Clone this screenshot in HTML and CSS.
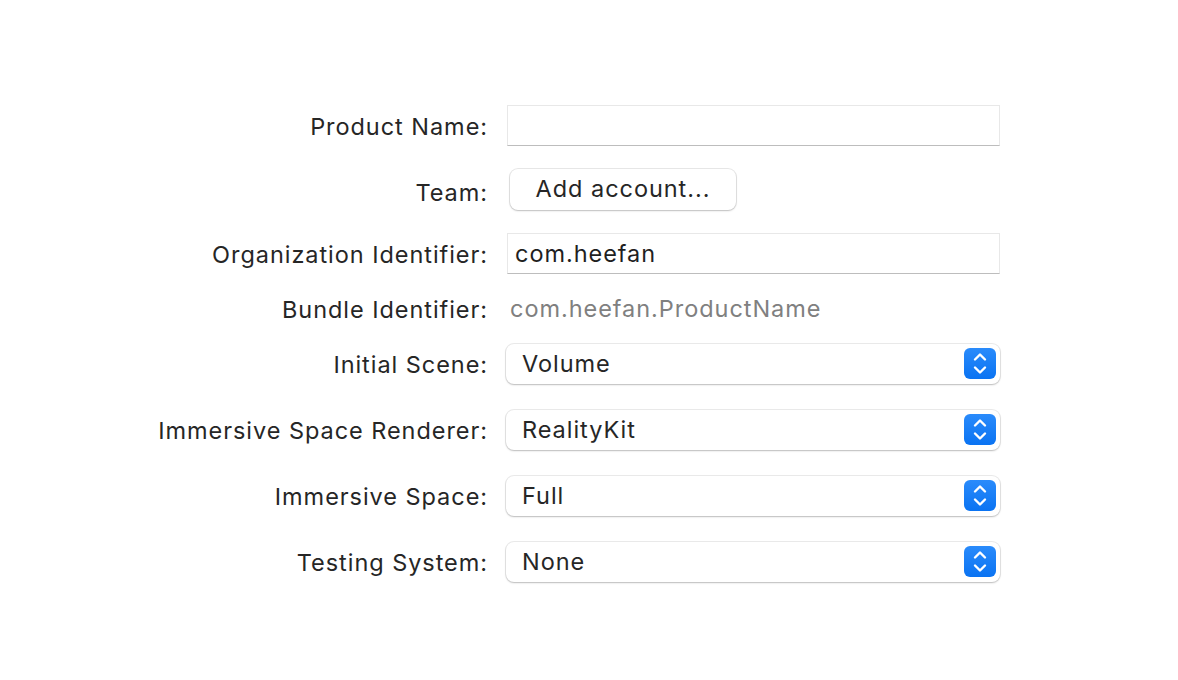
FILE: index.html
```html
<!DOCTYPE html>
<html>
<head>
<meta charset="utf-8">
<link rel="stylesheet" href="styles.css">
</head>
<body>
<div class="form">
  <div class="row">
    <div class="label">Product Name:</div>
    <div class="field"><div class="textfield"></div></div>
  </div>
  <div class="row">
    <div class="label label-team">Team:</div>
    <div class="field"><div class="button">Add account...</div></div>
  </div>
  <div class="row">
    <div class="label">Organization Identifier:</div>
    <div class="field"><div class="textfield">com.heefan</div></div>
  </div>
  <div class="row row-static">
    <div class="label">Bundle Identifier:</div>
    <div class="field"><div class="static">com.heefan.ProductName</div></div>
  </div>
  <div class="row row-popup">
    <div class="label">Initial Scene:</div>
    <div class="field"><div class="popup"><span>Volume</span><span class="stepper"><svg width="32" height="31" viewBox="0 0 32 31"><path d="M11 11.5 L16 6.5 L21 11.5 M11 19.5 L16 24.5 L21 19.5" fill="none" stroke="#fff" stroke-width="2.4" stroke-linecap="round" stroke-linejoin="round"/></svg></span></div></div>
  </div>
  <div class="row row-popup">
    <div class="label">Immersive Space Renderer:</div>
    <div class="field"><div class="popup"><span>RealityKit</span><span class="stepper"><svg width="32" height="31" viewBox="0 0 32 31"><path d="M11 11.5 L16 6.5 L21 11.5 M11 19.5 L16 24.5 L21 19.5" fill="none" stroke="#fff" stroke-width="2.4" stroke-linecap="round" stroke-linejoin="round"/></svg></span></div></div>
  </div>
  <div class="row row-popup">
    <div class="label">Immersive Space:</div>
    <div class="field"><div class="popup"><span>Full</span><span class="stepper"><svg width="32" height="31" viewBox="0 0 32 31"><path d="M11 11.5 L16 6.5 L21 11.5 M11 19.5 L16 24.5 L21 19.5" fill="none" stroke="#fff" stroke-width="2.4" stroke-linecap="round" stroke-linejoin="round"/></svg></span></div></div>
  </div>
  <div class="row row-popup">
    <div class="label">Testing System:</div>
    <div class="field"><div class="popup"><span>None</span><span class="stepper"><svg width="32" height="31" viewBox="0 0 32 31"><path d="M11 11.5 L16 6.5 L21 11.5 M11 19.5 L16 24.5 L21 19.5" fill="none" stroke="#fff" stroke-width="2.4" stroke-linecap="round" stroke-linejoin="round"/></svg></span></div></div>
  </div>
</div>
</body>
</html>
```

FILE: styles.css
```css
html, body {
  margin: 0;
  padding: 0;
  background: #ffffff;
}
body {
  font-family: Inter, "Liberation Sans", sans-serif;
  font-size: 23.5px;
  letter-spacing: 0.95px;
  color: #262626;
  width: 1178px;
  height: 680px;
  overflow: hidden;
}
.form {
  display: flex;
  flex-direction: column;
  padding-top: 105px;
}
.row {
  display: grid;
  grid-template-columns: 487px 494px;
  column-gap: 19px;
  height: 41px;
  margin-bottom: 23px;
  align-items: center;
}
.row-static {
  height: 28px;
  margin-bottom: 18px;
}
.row-popup {
  margin-bottom: 25px;
}
.label {
  text-align: right;
  padding-top: 1px;
  white-space: nowrap;
  margin-right: -1px;
}
.label-team {
  padding-top: 6px;
}
.row-static .label,
.row-static .static {
  margin-top: -6px;
}
.row-static .label {
  margin-top: -4px;
}
.field {
  display: flex;
  align-items: center;
  height: 100%;
}
.textfield {
  box-sizing: border-box;
  margin-left: 1px;
  width: 493px;
  height: 41px;
  border: 1px solid #e8e8e8;
  border-bottom: 1px solid #bdbdbd;
  background: #fff;
  padding-left: 7px;
  display: flex;
  align-items: center;
  color: #1f1f1f;
}
.button {
  box-sizing: border-box;
  margin-left: 4px;
  width: 226px;
  height: 41px;
  border-radius: 8px;
  background: #fff;
  box-shadow: 0 0 0 1px rgba(0,0,0,0.09), 0 1px 2px rgba(0,0,0,0.18);
  display: flex;
  align-items: center;
  justify-content: center;
  padding-bottom: 2px;
}
.static {
  padding-left: 4px;
  color: #808080;
}
.popup {
  box-sizing: border-box;
  width: 494px;
  height: 40px;
  border-radius: 8px;
  background: #fff;
  box-shadow: 0 0 0 1px rgba(0,0,0,0.08), 0 1px 2px rgba(0,0,0,0.2);
  display: flex;
  align-items: center;
  justify-content: space-between;
  padding-left: 16px;
  padding-right: 4px;
}
.stepper {
  width: 32px;
  height: 31px;
  border-radius: 6px;
  background: linear-gradient(#2a8bfb, #0a73f2);
  display: flex;
}
```
